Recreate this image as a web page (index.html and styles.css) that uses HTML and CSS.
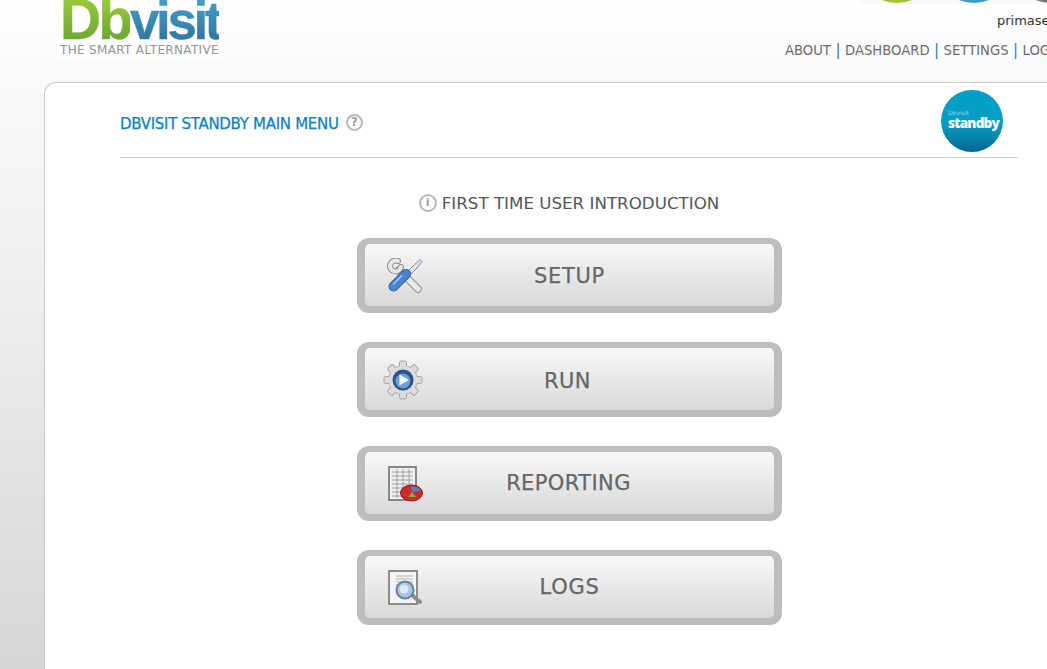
FILE: index.html
```html
<!DOCTYPE html>
<html lang="en">
<head>
<meta charset="utf-8">
<title>Dbvisit Standby</title>
<link rel="stylesheet" href="styles.css">
</head>
<body>
<header class="top">
  <div class="brand">
    <div class="wordmark"><span class="db">Db</span><span class="visit">visit</span></div>
    <div class="tagline">THE SMART ALTERNATIVE</div>
  </div>
  <div class="tools">
    <div class="lights">
      <span class="light green"></span><span class="light blue"></span><span class="light grey"></span>
    </div>
    <div class="user">primasec</div>
    <nav class="nav"><a>ABOUT</a><i>|</i><a>DASHBOARD</a><i>|</i><a>SETTINGS</a><i>|</i><a>LOGOUT</a></nav>
  </div>
</header>
<main class="card">
  <div class="title-row">
    <h1>DBVISIT STANDBY MAIN MENU</h1>
    <span class="help">?</span>
    <div class="badge"><small>Dbvisit</small><b>standby</b></div>
  </div>
  <div class="intro"><span class="info">i</span>FIRST TIME USER INTRODUCTION</div>
  <div class="menu">
    <a class="btn">
      <svg class="ico" viewBox="0 0 36 36">
        <path d="M12 12 L31 31" stroke="#8c8c8c" stroke-width="7.5" stroke-linecap="round"/>
        <path d="M12 12 L31 31" stroke="#e8e8e8" stroke-width="5.5" stroke-linecap="round"/>
        <path d="M11 3 A5.5 5.5 0 1 0 14 9" fill="none" stroke="#8c8c8c" stroke-width="6" stroke-linecap="round"/>
        <path d="M11 3 A5.5 5.5 0 1 0 14 9" fill="none" stroke="#e8e8e8" stroke-width="4" stroke-linecap="round"/>
        <path d="M33 1.5 L35 3.5 L30 10 L21 19 L18 16 L27 7 Z" fill="#dfe5ea" stroke="#7f8c98"/>
        <path d="M19 16 L6.5 28.5" stroke="#2f619f" stroke-width="10" stroke-linecap="round"/>
        <path d="M19 16 L6.5 28.5" stroke="#4a86cf" stroke-width="8" stroke-linecap="round"/>
        <path d="M15 17.5 L6 26.5" stroke="#a3c6ee" stroke-width="1.6"/>
      </svg>
      <span class="lbl setup">SETUP</span>
    </a>
    <a class="btn">
      <svg class="ico gear" viewBox="0 0 40 40">
        <circle cx="20" cy="20" r="14.5" fill="#dcdcdc" stroke="#a6a6a6"/>
        <g fill="#dcdcdc" stroke="#a6a6a6">
          <rect x="16.5" y="1" width="7" height="7" rx="1.5"/>
          <rect x="16.5" y="1" width="7" height="7" rx="1.5" transform="rotate(45 20 20)"/>
          <rect x="16.5" y="1" width="7" height="7" rx="1.5" transform="rotate(90 20 20)"/>
          <rect x="16.5" y="1" width="7" height="7" rx="1.5" transform="rotate(135 20 20)"/>
          <rect x="16.5" y="1" width="7" height="7" rx="1.5" transform="rotate(180 20 20)"/>
          <rect x="16.5" y="1" width="7" height="7" rx="1.5" transform="rotate(225 20 20)"/>
          <rect x="16.5" y="1" width="7" height="7" rx="1.5" transform="rotate(270 20 20)"/>
          <rect x="16.5" y="1" width="7" height="7" rx="1.5" transform="rotate(315 20 20)"/>
        </g>
        <circle cx="20" cy="20" r="14" fill="#dcdcdc"/>
        <circle cx="20" cy="20" r="10.5" fill="#26558f"/>
        <circle cx="20" cy="21" r="7.5" fill="#6f9fd6"/>
        <path d="M16.5 14.5 L26 20 L16.5 25.5 Z" fill="#f4f7fb"/>
      </svg>
      <span class="lbl run">RUN</span>
    </a>
    <a class="btn">
      <svg class="ico" viewBox="0 0 36 36">
        <rect x="2" y="1" width="27" height="33" fill="#f0f0f0" stroke="#6f6f6f" stroke-width="1.6"/>
        <path d="M5 6H26M5 10H26M5 14H26M5 18H26M5 22H26M5 26H26M5 30H26M10 3V32M16 3V32M22 3V32" stroke="#a0a0a0"/>
        <ellipse cx="24.5" cy="27" rx="11" ry="8" fill="#cc2a2e" stroke="#8b1a1e"/>
        <path d="M25 26 L34 24.5 C32 21 27 20 24 20.5 Z" fill="#4f86c6"/>
        <path d="M25 26 L21.5 31 L29 31 Z" fill="#7fb23a"/>
      </svg>
      <span class="lbl rep">REPORTING</span>
    </a>
    <a class="btn">
      <svg class="ico" viewBox="0 0 36 36">
        <rect x="2" y="1" width="28" height="33" fill="#f4f4f4" stroke="#757575" stroke-width="1.6"/>
        <path d="M9 6H26M9 9H26M9 12H26M9 15H19" stroke="#b0b0b0"/>
        <path d="M25 25 L33 32" stroke="#8c8c8c" stroke-width="4" stroke-linecap="round"/>
        <circle cx="18" cy="20" r="8.5" fill="#a7c6ea" stroke="#6f7f92" stroke-width="2"/>
        <circle cx="17" cy="19" r="4.5" fill="#dce9f7"/>
      </svg>
      <span class="lbl logs">LOGS</span>
    </a>
  </div>
</main>
</body>
</html>
```
FILE: styles.css
```css
* { box-sizing: border-box; }
html { height: 100%; }
body {
  margin: 0;
  height: 669px;
  overflow: hidden;
  display: flex;
  flex-direction: column;
  font-family: "DejaVu Sans", sans-serif;
  background: linear-gradient(#ffffff 0, #f9f9f9 90px, #f1f1f1 250px, #d6d6d6 669px);
}
.top {
  height: 82px;
  flex: none;
  display: flex;
  justify-content: space-between;
  padding-left: 57px;
}
.brand {
  width: 166px;
  height: 59px;
  background: #fff;
  overflow: hidden;
  padding-left: 3px;
}
.wordmark {
  font: bold 57px/38px "Liberation Sans", sans-serif;
  height: 42px;
  white-space: nowrap;
  -webkit-text-stroke: .4px transparent;
}
.db, .visit {
  -webkit-background-clip: text;
  background-clip: text;
  color: transparent;
}
.db { background-image: linear-gradient(#a9d23c, #5f9e2f); letter-spacing: -3px; }
.visit { background-image: linear-gradient(#45a7d0, #2f6d96); font-size: 53px; letter-spacing: -3.4px; }
.tagline {
  font-size: 12px;
  line-height: 16px;
  color: #939393;
  white-space: nowrap;
  letter-spacing: .33px;
}
.tools {
  width: 262px;
  flex: none;
  overflow: hidden;
}
.lights {
  margin-left: 75px;
  height: 4px;
  display: flex;
  overflow: hidden;
  background: #fbf8f6;
}
.light { width: 80px; height: 80px; border-radius: 50%; margin-top: -77.5px; margin-right: -3px; flex: none; }
.green { background: #9fc63b; margin-left: -3px; }
.blue { background: #3f9bc4; }
.grey { background: #777; }
.user {
  margin-top: 9px;
  margin-left: 212px;
  font-size: 13px;
  line-height: 16px;
  color: #333;
  white-space: nowrap;
}
.nav {
  margin-top: 13px;
  font-size: 13.2px;
  line-height: 16px;
  color: #6b6b6b;
  white-space: nowrap;
}
.nav i { font-style: normal; color: #2f7fb0; font-size: 15px; margin: 0 4.5px; }
.card {
  flex: 1;
  margin-left: 44px;
  background: #fff;
  border: 1px solid #c6c6c6;
  border-right: 0;
  border-bottom: 0;
  border-radius: 12px 0 0 0;
  padding-left: 75px;
  padding-right: 29px;
}
.title-row {
  height: 75px;
  padding-top: 8px;
  display: flex;
  align-items: center;
  border-bottom: 1px solid #c5ced6;
  position: relative;
}
h1 {
  margin: 0;
  font-size: 15px;
  font-weight: normal;
  color: #0a82c0;
  white-space: nowrap;
  letter-spacing: -.3px;
  -webkit-text-stroke: .25px #0a82c0;
}
.help, .info {
  display: inline-flex;
  align-items: center;
  justify-content: center;
  border: 2px solid #b8b8b8;
  border-radius: 50%;
  color: #9c9c9c;
  flex: none;
}
.help { width: 17px; height: 17px; font-size: 12px; font-weight: bold; margin-left: 7px; margin-top: -4px; }
.badge {
  position: absolute;
  right: 15px;
  top: 7px;
  width: 62px;
  height: 62px;
  border-radius: 50%;
  background: linear-gradient(#00a0c6 0, #0a9dc3 55%, #04678f 100%);
  color: #fff;
  display: flex;
  flex-direction: column;
  justify-content: center;
  padding: 0 0 4px 7px;
}
.badge small { font-size: 6px; line-height: 7px; color: #9bd3e6; }
.badge b { font: 800 13.5px/14px "Open Sans", sans-serif; letter-spacing: -.75px; }
.intro {
  margin-top: 35px;
  height: 20px;
  display: flex;
  align-items: center;
  justify-content: center;
  font-size: 16.7px;
  line-height: 20px;
  color: #555;
  white-space: nowrap;
}
.info { width: 18px; height: 18px; font-size: 11px; font-weight: bold; margin-right: 5px; }
.menu {
  margin-top: 25px;
  margin-left: 237px;
  width: 425px;
  display: flex;
  flex-direction: column;
  gap: 29px;
}
.btn {
  height: 75px;
  border-style: solid;
  border-color: #bdbdbd;
  border-width: 6px 8px 7px;
  border-radius: 12px;
  background: linear-gradient(#f8f8f8, #d9d9d9);
  display: flex;
  align-items: center;
  position: relative;
  justify-content: center;
  color: #666;
}
.ico {
  position: absolute;
  left: 22px;
  top: 14px;
  width: 36px;
  height: 36px;
  filter: blur(.35px);
}
.gear { left: 18px; width: 40px; height: 40px; top: 12px; }
.lbl { font-size: 21px; letter-spacing: .7px; -webkit-text-stroke: .25px #666; }
.setup { margin-top: 2px; }
.run { margin: 4px 4px 0 0; letter-spacing: .5px; }
.rep { margin-right: 2px; letter-spacing: .4px; }
```
